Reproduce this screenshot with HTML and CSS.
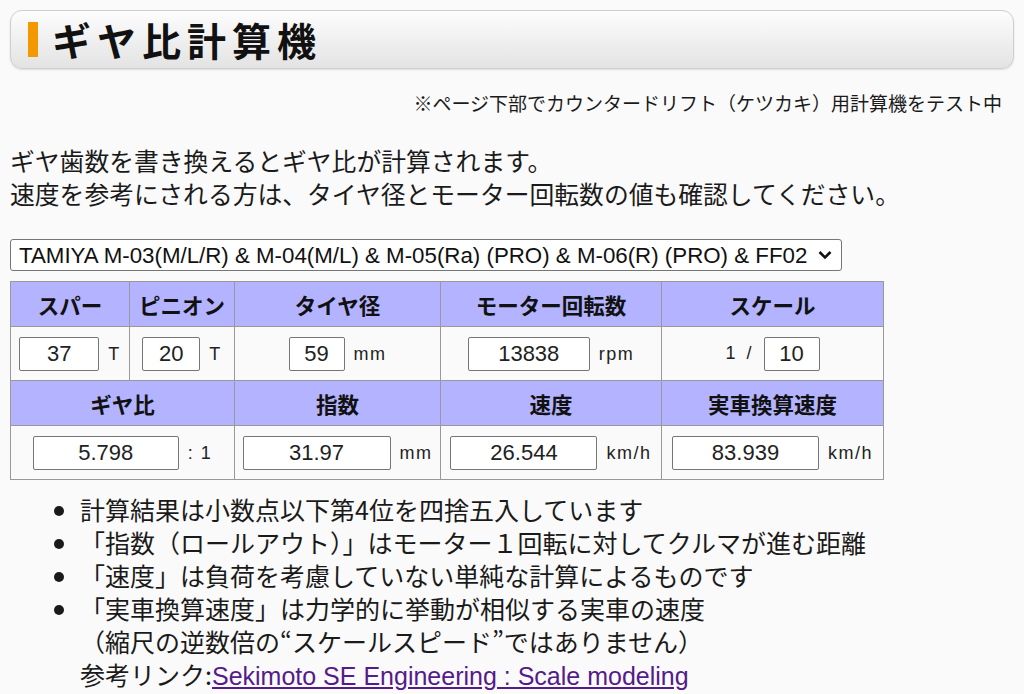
FILE: index.html
```html
<!DOCTYPE html>
<html lang="ja">
<head>
<meta charset="utf-8">
<title>ギヤ比計算機</title>
<link rel="stylesheet" href="styles.css">
</head>
<body>
<div class="page">
  <h1 class="title"><span class="title-bar"></span><span class="title-text">ギヤ比計算機</span></h1>
  <p class="note">※ページ下部でカウンタードリフト（ケツカキ）用計算機をテスト中</p>
  <p class="intro">ギヤ歯数を書き換えるとギヤ比が計算されます。<br>速度を参考にされる方は、タイヤ径とモーター回転数の値も確認してください。</p>
  <div class="select-wrap">
    <select class="model">
      <option>TAMIYA M-03(M/L/R) &amp; M-04(M/L) &amp; M-05(Ra) (PRO) &amp; M-06(R) (PRO) &amp; FF02</option>
    </select>
    <svg class="chev" width="14" height="10" viewBox="0 0 14 10"><path d="M1.5 2 L7 7.5 L12.5 2" fill="none" stroke="#111" stroke-width="2.6"/></svg>
  </div>
  <table class="calc">
    <colgroup>
      <col class="c1"><col class="c2"><col class="c3"><col class="c4"><col class="c5">
    </colgroup>
    <tr class="head">
      <th>スパー</th><th>ピニオン</th><th>タイヤ径</th><th>モーター回転数</th><th>スケール</th>
    </tr>
    <tr class="vals">
      <td><input class="in w80" value="37"><span class="unit">T</span></td>
      <td><input class="in w58" value="20"><span class="unit">T</span></td>
      <td><input class="in w56" value="59"><span class="unit">mm</span></td>
      <td><input class="in w122" value="13838"><span class="unit">rpm</span></td>
      <td><span class="pre">1 /</span><input class="in w56 nomr" value="10"></td>
    </tr>
    <tr class="head">
      <th colspan="2">ギヤ比</th><th>指数</th><th>速度</th><th>実車換算速度</th>
    </tr>
    <tr class="vals">
      <td colspan="2"><input class="in w146" value="5.798"><span class="unit">: 1</span></td>
      <td><input class="in w148" value="31.97"><span class="unit">mm</span></td>
      <td><input class="in w147" value="26.544"><span class="unit">km/h</span></td>
      <td><input class="in w147" value="83.939"><span class="unit">km/h</span></td>
    </tr>
  </table>
  <ul class="notes">
    <li>計算結果は小数点以下第4位を四捨五入しています</li>
    <li>「指数（ロールアウト）」はモーター１回転に対してクルマが進む距離</li>
    <li>「速度」は負荷を考慮していない単純な計算によるものです</li>
    <li>「実車換算速度」は力学的に挙動が相似する実車の速度<br>（縮尺の逆数倍の“スケールスピード”ではありません）<br>参考リンク:<a href="#">Sekimoto SE Engineering : Scale modeling</a></li>
  </ul>
</div>
</body>
</html>
```

FILE: styles.css
```css
html, body {
  margin: 0;
  padding: 0;
  background: #fafafa;
}
body {
  font-family: "Noto Sans CJK JP", "Noto Sans", sans-serif;
  color: #1a1a1a;
}
.page {
  padding: 10px 10px 0 10px;
}
.title {
  margin: 0;
  height: 57px;
  border: 1px solid #cfcfcf;
  border-radius: 12px;
  background: linear-gradient(#fdfdfd, #e3e3e3);
  box-shadow: 0 1px 2px rgba(0,0,0,0.12);
  display: flex;
  align-items: center;
  padding-left: 17px;
}
.title-bar {
  width: 10px;
  height: 35px;
  background: #f39800;
  margin-right: 14px;
}
.title-text {
  font-size: 39px;
  font-weight: bold;
  letter-spacing: 6px;
  color: #111;
  line-height: 1;
}
.note {
  margin: 20px 12px 0 0;
  text-align: right;
  font-size: 19px;
  line-height: 28px;
}
.intro {
  margin: 27px 0 0 0;
  font-size: 24.8px;
  line-height: 33px;
}
.select-wrap {
  position: relative;
  width: 832px;
  margin-top: 29px;
}
.model {
  display: block;
  width: 832px;
  height: 32px;
  font-family: "Liberation Sans", Arial, sans-serif;
  font-size: 22.3px;
  color: #111;
  background: #fff;
  border: 1px solid #767676;
  border-radius: 3px;
  padding: 0 30px 0 8px;
  appearance: none;
  -webkit-appearance: none;
}
.chev {
  position: absolute;
  right: 10px;
  top: 11px;
  pointer-events: none;
}
.calc {
  margin-top: 10px;
  border-collapse: collapse;
  table-layout: fixed;
  width: 874px;
}
.c1 { width: 119px; }
.c2 { width: 105px; }
.c3 { width: 206px; }
.c4 { width: 221px; }
.c5 { width: 222px; }
.calc th, .calc td {
  border: 1px solid #999;
  text-align: center;
  padding: 0;
  white-space: nowrap;
}
.calc th {
  background: #b3b3ff;
  height: 44px;
  font-size: 21.5px;
  font-weight: bold;
  color: #111;
}
.calc tr.vals td {
  height: 53px;
}
.in {
  box-sizing: border-box;
  height: 34px;
  border: 1px solid #767676;
  border-radius: 2px;
  background: #fff;
  font-family: "Liberation Sans", Arial, sans-serif;
  font-size: 22px;
  color: #222;
  text-align: center;
  padding: 0 2px;
  margin: 0 9px 0 0;
  vertical-align: middle;
}
.nomr { margin-right: 0; }
.w56 { width: 56px; }
.w58 { width: 58px; }
.w80 { width: 80px; }
.w122 { width: 122px; }
.w146 { width: 146px; }
.w147 { width: 147px; }
.w148 { width: 148px; }
.unit, .pre {
  font-family: "Liberation Sans", Arial, sans-serif;
  font-size: 18px;
  letter-spacing: 1.5px;
  color: #222;
  vertical-align: middle;
}
.pre {
  margin-right: 9px;
  letter-spacing: 3px;
}
.notes {
  margin: 13px 0 0 0;
  padding-left: 70px;
  font-size: 25px;
  line-height: 33px;
}
.notes a {
  font-family: "Liberation Sans", Arial, sans-serif;
  font-size: 25px;
  color: #551a8b;
  text-decoration: underline;
}
```
